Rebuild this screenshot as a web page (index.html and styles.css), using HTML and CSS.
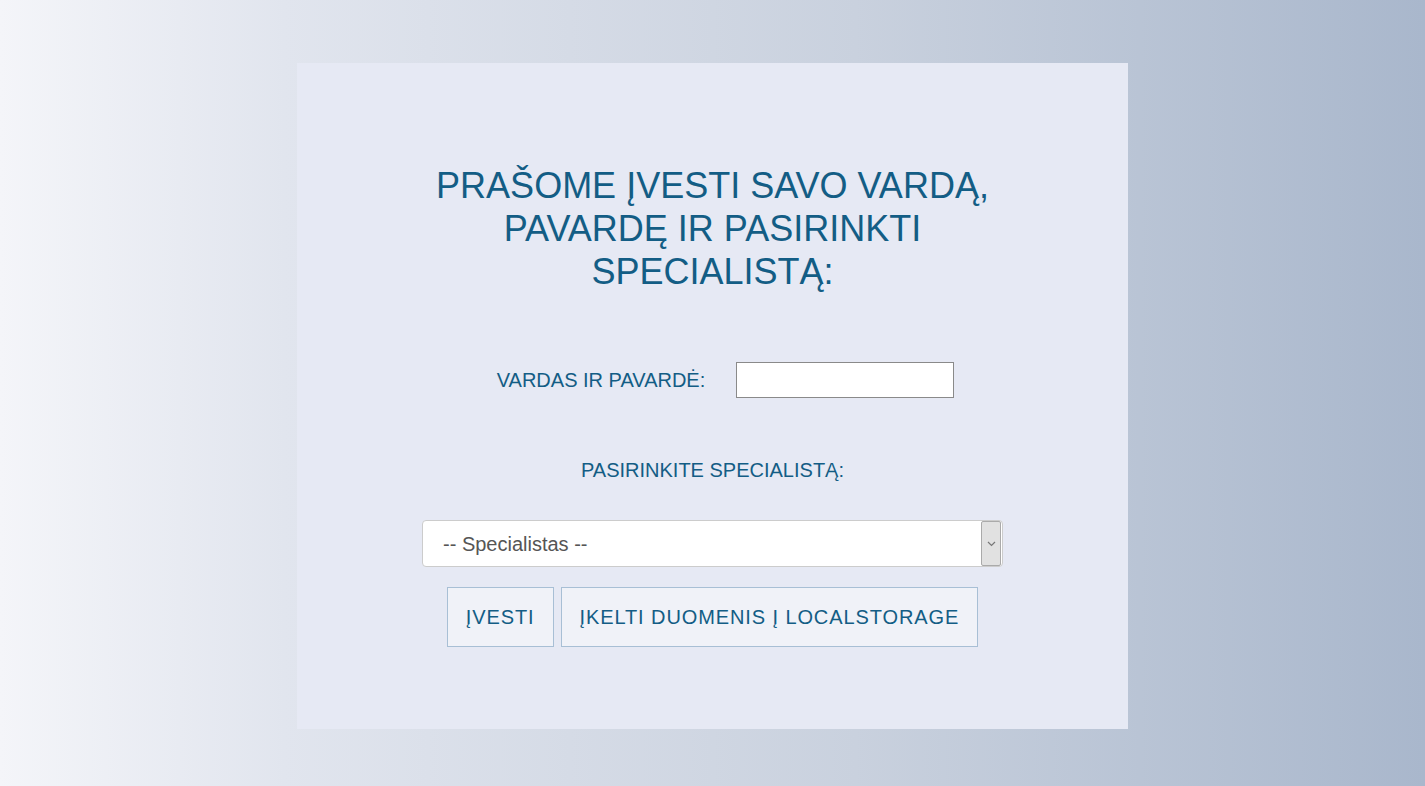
FILE: index.html
```html
<!DOCTYPE html>
<html lang="lt">
<head>
  <meta charset="UTF-8">
  <title>Registracija pas specialistą</title>
  <meta name="viewport" content="width=device-width, initial-scale=1">
  <link rel="stylesheet" href="styles.css">
</head>
<body>
  <div class="card">
    <h1 class="title">PRAŠOME ĮVESTI SAVO VARDĄ, PAVARDĘ IR PASIRINKTI SPECIALISTĄ:</h1>
    <div class="name-row">
      <label for="clientName">VARDAS IR PAVARDĖ:</label>
      <input type="text" id="clientName">
    </div>
    <div class="spec-label">PASIRINKITE SPECIALISTĄ:</div>
    <div class="select-wrap">
      <select id="specialist">
        <option>-- Specialistas --</option>
      </select>
      <span class="select-arrow">
        <svg width="9" height="6" viewBox="0 0 9 6"><path d="M1 1l3.5 3.5L8 1" fill="none" stroke="#777" stroke-width="1.2"/></svg>
      </span>
    </div>
    <div class="btn-row">
      <button class="btn">ĮVESTI</button>
      <button class="btn">ĮKELTI DUOMENIS Į LOCALSTORAGE</button>
    </div>
  </div>
</body>
</html>
```

FILE: styles.css
```css
:root { --text-color: #135d85; --card-bg: #e6e9f4; }
* { box-sizing: border-box; margin: 0; padding: 0; }
body { font-family: 'Liberation Sans', Arial, sans-serif; height: 100vh; overflow: hidden; background: linear-gradient(to right, #f4f5f9 0%, #e1e5ee 20%, #c9d1de 60%, #a9b7cc 100%); padding-top: 63px; }
.card { width: 831px; height: 666px; margin-left: 297px; background: var(--card-bg); display: flex; flex-direction: column; align-items: center; padding-top: 101px; }
.title { width: 590px; font-size: 36px; font-weight: normal; line-height: 43px; text-align: center; color: var(--text-color); }
.name-row { display: flex; align-items: center; gap: 31px; margin-top: 69px; margin-left: 26px; }
.name-row label { font-size: 20px; color: var(--text-color); }
.name-row input { width: 218px; height: 36px; border: 1px solid #8a8a8a; background: #fff; }
.spec-label { margin-top: 61px; font-size: 20px; color: var(--text-color); }
.select-wrap { position: relative; width: 581px; height: 47px; margin-top: 38px; }
.select-wrap select { width: 100%; height: 100%; appearance: none; border: 1px solid #ccc; border-radius: 4px; background: #fff; padding-left: 20px; font-family: inherit; font-size: 20px; color: #555; }
.select-arrow { position: absolute; top: 1px; right: 2px; width: 20px; height: 45px; background: #e1e1e1; border: 1px solid #aaa; border-radius: 2px; display: flex; align-items: center; justify-content: center; }
.btn-row { display: flex; gap: 7px; margin-top: 20px; }
.btn { height: 60px; padding: 0 18px; background: #f0f2f8; border: 1px solid #a8bfd5; font-family: inherit; font-size: 20px; letter-spacing: 0.9px; color: var(--text-color); cursor: pointer; }
```
